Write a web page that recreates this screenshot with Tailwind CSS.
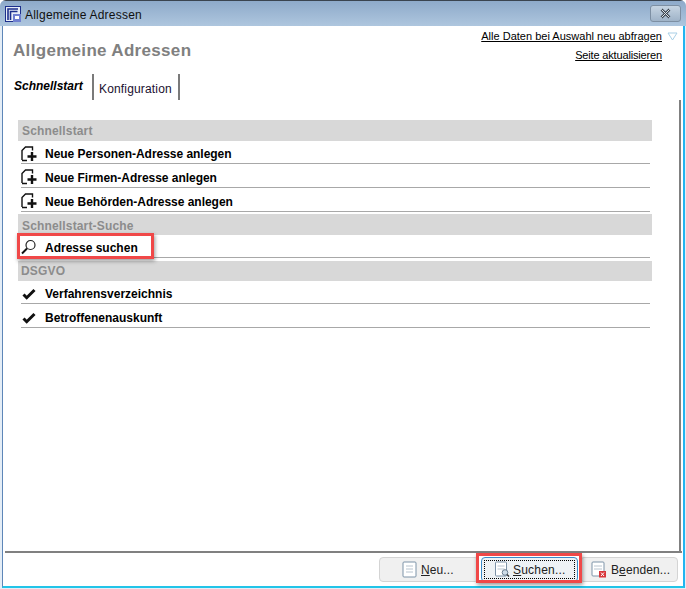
<!DOCTYPE html>
<html>
<head>
<meta charset="utf-8">
<script src="https://cdn.jsdelivr.net/npm/@tailwindcss/browser@4"></script>
</head>
<body class="bg-white">
<div class="relative w-[686px] h-[589px] overflow-hidden flex flex-col font-['Liberation_Sans',Arial,sans-serif] text-black bg-[#e4edf6] rounded-t-[6px]">
  <!-- title bar -->
  <div class="h-[26px] shrink-0 flex items-center pl-[5px] pr-[5px] bg-gradient-to-b from-[#8eaaca] to-[#aec6de] border-t border-[#3a4450]">
    <svg width="17" height="17" viewBox="0 0 17 17" class="shrink-0 mt-[1px]">
      <rect x="0.5" y="0.5" width="15" height="15" fill="#e8eef8" stroke="#1c2f8c"/>
      <path d="M3 14V3h10M5.500 14V5.500h7" fill="none" stroke="#1c2f8c" stroke-width="1.600"/>
      <rect x="8" y="8" width="8" height="8" fill="#6f7fd0"/>
      <rect x="10" y="10" width="4" height="3" fill="#fff"/>
    </svg>
    <span class="ml-[3px] mt-[2px] text-[12px] tracking-[0.22px] text-[#101010]">Allgemeine Adressen</span>
    <div class="ml-auto w-[31px] h-[17px] -mt-[1px] rounded-[3px] border border-[#7d8fa3] bg-gradient-to-b from-[#c6d4e2] to-[#9fb3c8] flex items-center justify-center">
      <svg width="13" height="11" viewBox="0 0 13 11"><path d="M2.500 1.500l8 8M10.500 1.500l-8 8" stroke="#3e4650" stroke-width="2.600" fill="none"/><path d="M2.500 1.500l8 8M10.500 1.500l-8 8" stroke="#dfe6ec" stroke-width="1" fill="none"/></svg>
    </div>
  </div>
  <!-- client -->
  <div class="flex-1 ml-[2px] mr-[1px] mb-[1px] pl-[1px] bg-white border-l border-[#5d86b8] border-r-[2px] border-r-[#22b4f0] border-b-[2px] border-b-[#22c4e8] flex flex-col relative">
    <!-- header -->
    <div class="h-[40px] shrink-0 flex justify-between pl-[9px]">
      <h1 class="mt-[15px] text-[17px] leading-[20px] font-bold tracking-[0.32px] text-[#808080]">Allgemeine Adressen</h1>
      <div class="flex flex-col items-end mt-[4px] text-[11px] leading-[13px]">
        <div class="flex items-center">
          <a class="underline tracking-[0.01px]">Alle Daten bei Auswahl neu abfragen</a>
          <svg width="11" height="9" viewBox="0 0 11 9" class="ml-[5px] mr-[5px]"><path d="M1 1h9L5.500 8z" fill="none" stroke="#a9cfe6"/></svg>
        </div>
        <a class="underline mt-[6px] mr-[21px] -tracking-[0.16px]">Seite aktualisieren</a>
      </div>
    </div>
    <!-- tabs -->
    <div class="h-[34px] shrink-0 flex pl-[10px]">
      <div class="w-[79px] pt-[13px] text-[12px] leading-[15px] font-bold italic">Schnellstart</div>
      <div class="-ml-[1px] mt-[8px] h-[26px] border-l-[2px] border-[#7a7a7a] pl-[5px] pt-[8px] pr-[6px] border-r-[2px] border-r-[#7a7a7a] text-[12px] leading-[15px] tracking-[0.16px] text-[#1a1030]">Konfiguration</div>
    </div>
    <!-- content frame -->
    <div class="flex-1 min-h-0 flex flex-col">
      <div class="flex-1 min-h-0 pl-[14px] pt-[20px] border-r-[2px] border-[#808080] w-[677px]">
        <div class="w-[634px]">
          <div class="h-[21px] bg-[#d8d8d8] pl-[4px] text-[12px] leading-[23px] font-bold text-[#8c8c8c] tracking-[0.16px]">Schnellstart</div>
          <div class="ml-[3px] mr-[2px] h-[23px] pt-[4px] border-b border-[#a8a8a8] flex items-center text-[12px] font-bold -tracking-[0.03px]">
            <svg viewBox="0 0 18 17" class="w-[18px] h-[17px] mr-[6px] shrink-0"><path d="M1 14V4.500L4.500 1h7v3.500M1 14.500h5" fill="none" stroke="#111" stroke-width="1.400"/><path d="M6.500 10.500h9M11 6v9" stroke="#111" stroke-width="2.400" fill="none"/></svg><span>Neue Personen-Adresse anlegen</span>
          </div>
          <div class="ml-[3px] mr-[2px] h-[24px] pt-[4px] border-b border-[#a8a8a8] flex items-center text-[12px] font-bold -tracking-[0.03px]">
            <svg viewBox="0 0 18 17" class="w-[18px] h-[17px] mr-[6px] shrink-0"><path d="M1 14V4.500L4.500 1h7v3.500M1 14.500h5" fill="none" stroke="#111" stroke-width="1.400"/><path d="M6.500 10.500h9M11 6v9" stroke="#111" stroke-width="2.400" fill="none"/></svg><span>Neue Firmen-Adresse anlegen</span>
          </div>
          <div class="ml-[3px] mr-[2px] h-[24px] pt-[4px] border-b border-[#a8a8a8] flex items-center text-[12px] font-bold -tracking-[0.03px]">
            <svg viewBox="0 0 18 17" class="w-[18px] h-[17px] mr-[6px] shrink-0"><path d="M1 14V4.500L4.500 1h7v3.500M1 14.500h5" fill="none" stroke="#111" stroke-width="1.400"/><path d="M6.500 10.500h9M11 6v9" stroke="#111" stroke-width="2.400" fill="none"/></svg><span>Neue Behörden-Adresse anlegen</span>
          </div>
          <div class="mt-[2px] h-[21px] bg-[#d8d8d8] pl-[4px] text-[12px] leading-[25px] font-bold text-[#8c8c8c] tracking-[0.16px] overflow-hidden">Schnellstart-Suche</div>
          <div class="ml-[3px] mr-[2px] h-[23px] pt-[4px] border-b border-[#a8a8a8] flex items-center text-[12px] font-bold tracking-[0px]">
            <svg viewBox="0 0 16 16" class="w-[16px] h-[16px] mr-[8px] shrink-0 -mt-[2px]"><circle cx="9.500" cy="6" r="4.500" fill="none" stroke="#222" stroke-width="1.200"/><path d="M6 9.500l-5 5" stroke="#111" stroke-width="2"/></svg><span>Adresse suchen</span>
          </div>
          <div class="mt-[3px] h-[20px] bg-[#d8d8d8] pl-[3px] text-[12px] leading-[21px] font-bold text-[#8c8c8c] tracking-[0.16px]">DSGVO</div>
          <div class="ml-[3px] mr-[2px] h-[23px] pt-[4px] border-b border-[#a8a8a8] flex items-center text-[12px] font-bold tracking-[0px]">
            <svg viewBox="0 0 14 12" class="w-[14px] h-[12px] ml-[1px] mr-[9px] shrink-0 -mt-[1px]"><path d="M1.500 6.500l3.200 3.200L12.500 2" fill="none" stroke="#111" stroke-width="3"/></svg><span>Verfahrensverzeichnis</span>
          </div>
          <div class="ml-[3px] mr-[2px] h-[24px] pt-[5px] border-b border-[#a8a8a8] flex items-center text-[12px] font-bold tracking-[0px]">
            <svg viewBox="0 0 14 12" class="w-[14px] h-[12px] ml-[1px] mr-[9px] shrink-0 -mt-[1px]"><path d="M1.500 6.500l3.200 3.200L12.500 2" fill="none" stroke="#111" stroke-width="3"/></svg><span>Betroffenenauskunft</span>
          </div>
        </div>
      </div>
      <!-- footer -->
      <div class="h-[35px] shrink-0 border-t-[2px] border-[#808080] ml-[1px] w-[677px] flex justify-end items-start pr-[4px] pt-[4px] gap-[2px] text-[12px]">
        <div class="w-[100px] h-[25px] rounded-[4px] border border-[#d4d4d4] bg-[#f0f0f0] flex items-center pl-[22px] gap-[4px]">
          <svg width="15" height="17" viewBox="0 0 15 17"><rect x="1" y="1" width="13" height="15" rx="1" fill="#fff" stroke="#7d93a8"/><path d="M4 5h7M4 8h7M4 11h7" stroke="#b8c4cf"/></svg>
          <span class="tracking-[0.1px] text-[#222]"><span class="underline">N</span>eu...</span>
        </div>
        <div class="w-[97px] h-[25px] rounded-[4px] border-[1.500px] border-[#3a8ac8] bg-[#eef2f5] flex items-center justify-center">
          <div class="w-[91px] h-[19px] border border-dotted border-black flex items-center pl-[9px] gap-[3px]">
            <svg width="16" height="17" viewBox="0 0 15 17"><rect x="1" y="1" width="11" height="14" rx="1" fill="#fff" stroke="#7d93a8"/><path d="M3 5h7M3 8h7" stroke="#b8c4cf"/><circle cx="10.500" cy="11.500" r="2.800" fill="#cfdde8" stroke="#6a7d90"/><path d="M12.500 13.500l2 2" stroke="#333" stroke-width="1.500"/></svg>
            <span class="tracking-[0.2px] text-[#222]"><span class="underline">S</span>uchen...</span>
          </div>
        </div>
        <div class="w-[98px] h-[25px] rounded-[4px] border border-[#d4d4d4] bg-[#f0f0f0] flex items-center pl-[10px] gap-[4px]">
          <svg width="16" height="17" viewBox="0 0 16 17"><rect x="1" y="1" width="12" height="14" rx="1" fill="#fff" stroke="#7d93a8"/><path d="M3 5h8M3 8h8" stroke="#b8c4cf"/><rect x="8" y="10" width="7" height="6.500" fill="#d8363a"/><path d="M10 11.500l3 3.500M13 11.500l-3 3.500" stroke="#fff"/></svg>
          <span class="tracking-[0.1px] text-[#222]">B<span class="underline">e</span>enden...</span>
        </div>
      </div>
    </div>
  </div>
  <!-- red highlights -->
  <div class="absolute left-[17px] top-[233px] w-[137px] h-[26px] border-[3px] border-[#f04848] shadow-[1px_2px_4px_rgba(0,0,0,0.4)]"></div>
  <div class="absolute left-[476px] top-[553px] w-[106px] h-[30px] border-[3px] border-[#f04848] shadow-[1px_2px_4px_rgba(0,0,0,0.4)]"></div>
</div>
</body>
</html>
